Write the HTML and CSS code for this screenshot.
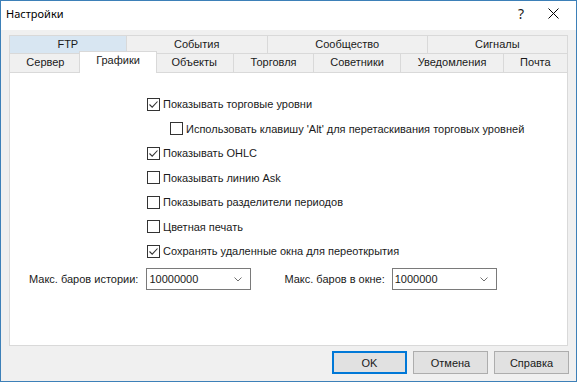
FILE: index.html
```html
<!DOCTYPE html>
<html lang="ru">
<head>
    <meta charset="UTF-8">
    <title>Настройки</title>
    <link rel="stylesheet" href="styles.css">
</head>
<body>

<div class="window">
    <div class="titlebar">
        <span class="title">Настройки</span>
        <span class="help">?</span>
        <span class="close">
            <svg width="11" height="11" viewBox="0 0 11 11"><path d="M0.5 0.5 L10.5 10.5 M10.5 0.5 L0.5 10.5" stroke="#000" stroke-width="1" fill="none"/></svg>
        </span>
    </div>

    <div class="content">
        <div class="tabs">
            <div class="tab-row top">
                <div class="tab hover">FTP</div>
                <div class="tab">События</div>
                <div class="tab">Сообщество</div>
                <div class="tab">Сигналы</div>
            </div>
            <div class="tab-row bottom">
                <div class="tab">Сервер</div>
                <div class="tab active">Графики</div>
                <div class="tab">Объекты</div>
                <div class="tab">Торговля</div>
                <div class="tab">Советники</div>
                <div class="tab">Уведомления</div>
                <div class="tab">Почта</div>
            </div>
        </div>

        <div class="panel">
            <div class="options">
                <label class="opt"><span class="box"><svg width="11" height="11" viewBox="0 0 11 11"><path d="M1.5 5.5 L4.2 8.2 L9.5 2.5" stroke="#333" stroke-width="1.1" fill="none"/></svg></span>Показывать торговые уровни</label>
                <label class="opt sub"><span class="box"></span>Использовать клавишу 'Alt' для перетаскивания торговых уровней</label>
                <label class="opt"><span class="box"><svg width="11" height="11" viewBox="0 0 11 11"><path d="M1.5 5.5 L4.2 8.2 L9.5 2.5" stroke="#333" stroke-width="1.1" fill="none"/></svg></span>Показывать OHLC</label>
                <label class="opt"><span class="box"></span>Показывать линию Ask</label>
                <label class="opt"><span class="box"></span>Показывать разделители периодов</label>
                <label class="opt"><span class="box"></span>Цветная печать</label>
                <label class="opt"><span class="box"><svg width="11" height="11" viewBox="0 0 11 11"><path d="M1.5 5.5 L4.2 8.2 L9.5 2.5" stroke="#333" stroke-width="1.1" fill="none"/></svg></span>Сохранять удаленные окна для переоткрытия</label>
            </div>

            <div class="limits">
                <span class="limit-label">Макс. баров истории:</span>
                <div class="combo">
                    <span class="combo-value">10000000</span>
                    <svg class="chevron" width="8" height="5" viewBox="0 0 8 5"><path d="M0.5 0.5 L4 4 L7.5 0.5" stroke="#707070" fill="none"/></svg>
                </div>
                <span class="limit-label second">Макс. баров в окне:</span>
                <div class="combo">
                    <span class="combo-value">1000000</span>
                    <svg class="chevron" width="8" height="5" viewBox="0 0 8 5"><path d="M0.5 0.5 L4 4 L7.5 0.5" stroke="#707070" fill="none"/></svg>
                </div>
            </div>
        </div>

        <div class="buttons">
            <button class="btn default">OK</button>
            <button class="btn">Отмена</button>
            <button class="btn">Справка</button>
        </div>
    </div>
</div>

</body>
</html>
```

FILE: styles.css
```css
body {
    margin: 0;
    font-family: "Liberation Sans", Arial, sans-serif;
    font-size: 11px;
    color: #1a1a1a;
}

.window {
    width: 577px;
    height: 382px;
    box-sizing: border-box;
    border: 1px solid #3d80b8;
    background: #f0f0f0;
    display: flex;
    flex-direction: column;
}

/* Title bar */
.titlebar {
    height: 29px;
    background: #fff;
    display: flex;
    align-items: center;
    padding: 0 7px 4px 5px;
    box-sizing: border-box;
}

.title {
    flex: 1;
    font-family: "Noto Sans", sans-serif;
    font-size: 11px;
    color: #000;
}

.help {
    width: 32px;
    margin-left: 4px;
    text-align: center;
    font-family: "Noto Sans", sans-serif;
    font-size: 14px;
}

.close {
    width: 32px;
    display: flex;
    justify-content: center;
}

/* Main area */
.content {
    flex: 1;
    display: flex;
    flex-direction: column;
    padding: 5px 8px 7px;
}

/* Tabs */
.tab-row {
    display: flex;
}

.tab {
    flex: auto;
    text-align: center;
    line-height: 17px;
    box-sizing: border-box;
    border: 1px solid #d9d9d9;
    border-bottom: none;
    margin-left: -1px;
    background: #f0f0f0;
}

.tab:first-child {
    margin-left: 0;
}

.top .tab {
    height: 18px;
}

.bottom .tab {
    height: 19px;
}

.tab.hover {
    background: #d8e6f2;
}

.bottom .tab.active {
    height: 22px;
    margin: -2px -2px -1px -3px;
    background: #fff;
    position: relative;
    z-index: 1;
}

/* Page content */
.panel {
    flex: 1;
    background: #fff;
    border: 1px solid #d9d9d9;
    padding: 19px 0 0 19px;
}

.options {
    margin-left: 118px;
}

.opt {
    display: flex;
    align-items: center;
    height: 24.5px;
}

.opt.sub {
    margin-left: 23px;
}

.box {
    width: 13px;
    height: 13px;
    box-sizing: border-box;
    border: 1px solid #333;
    margin-right: 3px;
    background: #fff;
    display: flex;
}

.limits {
    display: flex;
    align-items: center;
    margin-top: 4.5px;
}

.limit-label {
    margin-right: 8px;
}

.limit-label.second {
    margin-left: 33px;
    margin-right: 7px;
}

.combo {
    width: 105px;
    height: 22px;
    box-sizing: border-box;
    border: 1px solid #7a7a7a;
    background: #fff;
    display: flex;
    align-items: center;
    padding: 0 8px 0 2px;
}

.combo-value {
    flex: 1;
}

/* Dialog buttons */
.buttons {
    display: flex;
    justify-content: flex-end;
    gap: 6px;
    margin: 5px -1px 0 0;
}

.btn {
    width: 75px;
    height: 23px;
    box-sizing: border-box;
    border: 1px solid #adadad;
    background: #e1e1e1;
    font-family: "Liberation Sans", Arial, sans-serif;
    font-size: 11px;
    color: #1a1a1a;
    padding: 0;
}

.btn.default {
    border-color: #0078d7;
    box-shadow: inset 0 0 0 1px #0078d7;
}
```
